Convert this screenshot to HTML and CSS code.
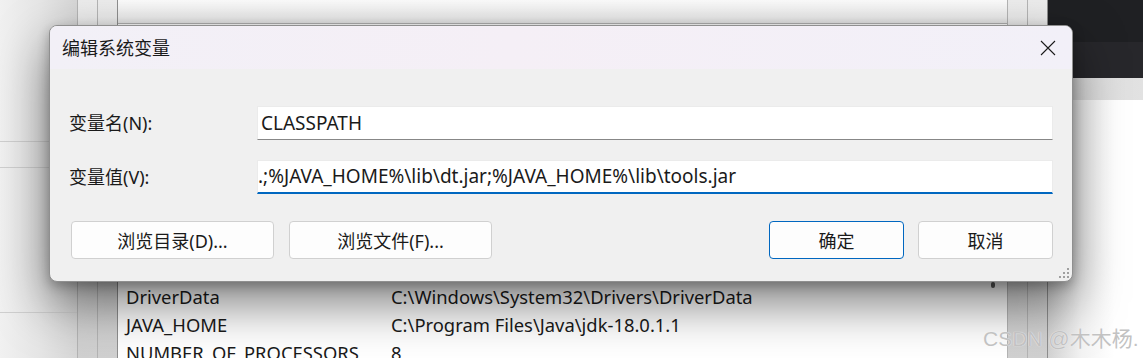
FILE: index.html
```html
<!DOCTYPE html>
<html lang="zh-CN">
<head>
    <meta charset="UTF-8">
    <meta name="viewport" content="width=device-width, initial-scale=1.0">
    <title>编辑系统变量</title>
    <link rel="stylesheet" href="styles.css">
</head>
<body>
    <!-- Okno v pozadí (zoznam systémových premenných) -->
    <div class="desktop">
        <div class="side-left">
            <div class="hline"></div>
            <div class="hline second"></div>
            <div class="hline third"></div>
        </div>
        <div class="frame-strip"></div>
        <div class="frame-strip"></div>

        <div class="list-pane">
            <div class="pane-top"></div>
            <div class="pane-body">
                <div class="var-table">
                    <div class="var-row">
                        <span class="var-name">DriverData</span>
                        <span class="var-value">C:\Windows\System32\Drivers\DriverData</span>
                    </div>
                    <div class="var-row">
                        <span class="var-name">JAVA_HOME</span>
                        <span class="var-value">C:\Program Files\Java\jdk-18.0.1.1</span>
                    </div>
                    <div class="var-row">
                        <span class="var-name">NUMBER_OF_PROCESSORS</span>
                        <span class="var-value">8</span>
                    </div>
                </div>
                <div class="scroll-track">
                    <span class="scroll-thumb"></span>
                </div>
            </div>
        </div>

        <div class="frame-strip"></div>
        <div class="frame-strip"></div>
        <div class="side-right">
            <div class="dark-top"></div>
            <div class="dark-mid"></div>
            <div class="grey-band"></div>
            <div class="light-area"></div>
        </div>
    </div>

    <!-- Dialóg -->
    <div class="dialog">
        <div class="title-bar">
            <span class="title">编辑系统变量</span>
            <svg class="close-icon" width="16" height="16" viewBox="0 0 16 16">
                <path d="M1 1 L15 15 M15 1 L1 15" stroke="#1b1b1b" stroke-width="1.1" fill="none"/>
            </svg>
        </div>
        <div class="dialog-body">
            <div class="field-grid">
                <label class="field-label">变量名(N):</label>
                <div class="field">CLASSPATH</div>
                <label class="field-label">变量值(V):</label>
                <div class="field focused">.;%JAVA_HOME%\lib\dt.jar;%JAVA_HOME%\lib\tools.jar</div>
            </div>
            <div class="button-row">
                <button class="btn wide">浏览目录(D)...</button>
                <button class="btn wide second">浏览文件(F)...</button>
                <div class="right-buttons">
                    <button class="btn primary">确定</button>
                    <button class="btn">取消</button>
                </div>
            </div>
        </div>
        <svg class="grip" width="12" height="12" viewBox="0 0 12 12">
            <rect x="9" y="1" width="2" height="2" fill="#a0a0a0"/>
            <rect x="5" y="5" width="2" height="2" fill="#a0a0a0"/>
            <rect x="9" y="5" width="2" height="2" fill="#a0a0a0"/>
            <rect x="1" y="9" width="2" height="2" fill="#a0a0a0"/>
            <rect x="5" y="9" width="2" height="2" fill="#a0a0a0"/>
            <rect x="9" y="9" width="2" height="2" fill="#a0a0a0"/>
        </svg>
    </div>

    <div class="watermark">CSDN @木木杨.</div>
</body>
</html>
```

FILE: styles.css
```css
body {
    margin: 0;
    width: 1143px;
    height: 358px;
    overflow: hidden;
    position: relative;
    font-family: "Noto Sans", "Noto Sans CJK SC", sans-serif;
    font-size: 18px;
    color: #1a1a1a;
    background-color: #f3f3f3;
}

/* pozadie */
.desktop {
    display: flex;
    height: 358px;
    overflow: hidden;
}

.side-left {
    width: 77px;
    padding-top: 141px;
    background: linear-gradient(90deg, #f1f1f1, #e6e6e6 50%, #d6d6d6);
}

.hline {
    height: 1px;
    background-color: #cfcfcf;
}

.hline.second {
    margin-top: 25px;
}

.hline.third {
    margin-top: 144px;
}

.frame-strip {
    width: 19px;
    border-left: 1px solid #b4b4b4;
    background: linear-gradient(180deg, #ececec, #d6d6d6 75%, #d0d0d0);
}

.list-pane {
    width: 889px;
    border-left: 1px solid #8e8e8e;
    display: flex;
    flex-direction: column;
    background-color: #ffffff;
}

.pane-top {
    flex-shrink: 0;
    height: 23px;
    background: linear-gradient(180deg, #fbfbfb, #e6e6e6);
    border-bottom: 1px solid #b0b0b0;
}

.pane-body {
    flex: 1;
    min-height: 0;
    overflow: hidden;
    display: flex;
}

.var-table {
    flex: 1;
    padding-top: 259px;
}

.var-row {
    display: flex;
    height: 28px;
    line-height: 28px;
    font-size: 18.4px;
    white-space: nowrap;
}

.var-name {
    width: 265px;
    padding-left: 8px;
}

.scroll-track {
    width: 22px;
}

.scroll-thumb {
    display: block;
    width: 4px;
    height: 6px;
    margin: 258px 0 0 6px;
    border-radius: 2px;
    background-color: #5c5c5c;
}

.side-right {
    flex: 1;
    border-left: 1px solid #8e8e8e;
    display: flex;
    flex-direction: column;
}

.dark-top {
    height: 42px;
    background-color: #1f2023;
}

.dark-mid {
    height: 36px;
    background-color: #27272b;
}

.grey-band {
    height: 22px;
    background: linear-gradient(90deg, #cfcfcf, #dedede 40%, #e2e2e2);
}

.light-area {
    flex: 1;
    background: linear-gradient(90deg, #d2d2d2, #f3f3f3 35%, #ffffff 70%);
}

/* dialóg */
.dialog {
    position: absolute;
    left: 49px;
    top: 25px;
    width: 1024px;
    height: 257px;
    box-sizing: border-box;
    border: 1px solid #8f8f8f;
    border-radius: 8px;
    overflow: hidden;
    background-color: #f0f0f0;
    box-shadow: 0 22px 50px rgba(0, 0, 0, 0.5), 0 4px 12px rgba(0, 0, 0, 0.25);
}

.title-bar {
    height: 43px;
    display: flex;
    align-items: center;
    justify-content: space-between;
    padding: 0 16px 0 12px;
    background: linear-gradient(90deg, #f2f0f7, #f5eff6 45%, #f2f0f8);
}

.title {
    font-family: "Noto Sans CJK SC", sans-serif;
    font-size: 18px;
    color: #1a1a1a;
    margin-top: -1px;
}

.close-icon {
    margin-top: 1px;
}

.dialog-body {
    padding: 37px 19px 0 19px;
}

.field-grid {
    display: grid;
    grid-template-columns: 188px 1fr;
    row-gap: 20px;
    align-items: center;
}

.field-label {
    font-size: 18px;
    line-height: 34px;
}

.field {
    height: 34px;
    box-sizing: border-box;
    padding-left: 3px;
    line-height: 32px;
    font-size: 19px;
    background-color: #ffffff;
    border: 1px solid #ebebeb;
    border-bottom-color: #878787;
    white-space: nowrap;
    overflow: hidden;
}

.field.focused {
    padding-left: 0;
    border-bottom: 2px solid #0067c0;
    line-height: 31px;
}

.button-row {
    display: flex;
    margin-top: 27px;
    padding-left: 2px;
}

.btn {
    height: 38px;
    box-sizing: border-box;
    border: 1px solid #d0d0d0;
    border-radius: 4px;
    background-color: #fdfdfd;
    font-family: "Noto Sans", "Noto Sans CJK SC", sans-serif;
    font-size: 18px;
    color: #1a1a1a;
    padding: 0;
    width: 135px;
}

.btn.wide {
    width: 203px;
}

.btn.second {
    margin-left: 15px;
}

.btn.primary {
    border-color: #0067c0;
}

.right-buttons {
    margin-left: auto;
    display: flex;
    gap: 14px;
}

.grip {
    position: absolute;
    right: 2px;
    bottom: 2px;
}

.watermark {
    position: absolute;
    left: 983px;
    top: 322px;
    font-family: "Liberation Sans", "Noto Sans CJK SC", sans-serif;
    font-size: 21px;
    color: #c2c2c2;
    text-shadow: 0 0 1px #ffffff;
    white-space: nowrap;
}
```
